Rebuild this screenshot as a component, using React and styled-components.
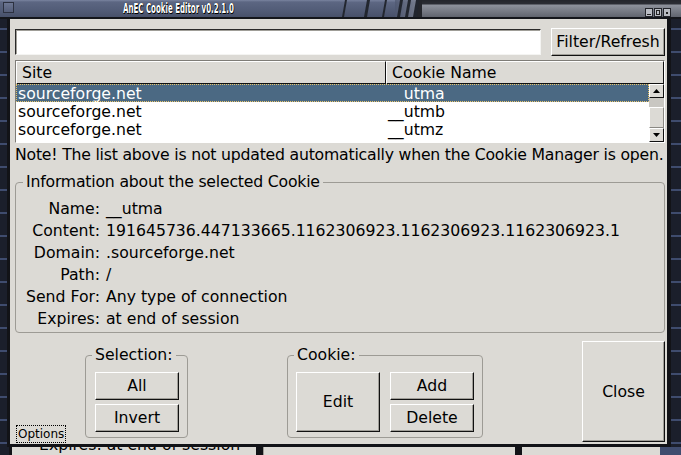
import React from 'react';
import styled, { createGlobalStyle } from 'styled-components';

const GlobalStyle = createGlobalStyle`
  html, body {
    margin: 0;
    padding: 0;
    background: #1f2330;
    overflow: hidden;
  }
`;

const Screen = styled.div`
  width: 681px;
  height: 455px;
  display: flex;
  flex-direction: column;
  overflow: hidden;
  background: #1f2330;
  font-family: "DejaVu Sans", "Bitstream Vera Sans", sans-serif;
  font-size: 15.7px;
  color: #000;
`;

/* ---------- title bar ---------- */

const TitleBar = styled.div`
  display: flex;
  height: 17px;
  flex-shrink: 0;
  border-bottom: 2px solid #14161b;
`;

const TitleLeft = styled.div`
  width: 340px;
  display: flex;
  align-items: center;
  background: linear-gradient(#7a84a0 0, #5c6682 2px, #525c77 60%, #48516a);
`;

const CornerBtn = styled.div`
  width: 9px;
  height: 9px;
  margin: 0 0 3px 3px;
  border: 1px solid #2c3140;
  background: linear-gradient(#6c7692, #545d78);
`;

const TitleText = styled.span`
  display: inline-block;
  margin-left: 109px;
  font-family: "DejaVu Sans Condensed", "DejaVu Sans", sans-serif;
  font-weight: bold;
  font-size: 14px;
  line-height: 17px;
  color: #fff;
  white-space: nowrap;
  transform: scaleX(0.56);
  transform-origin: left center;
  text-shadow: 1px 1px 0 #000, 0 0 1px #000;
`;

const TitleRight = styled.div`
  flex: 1;
  display: flex;
  justify-content: flex-end;
  align-items: flex-end;
  padding-right: 10px;
  background: linear-gradient(#24262c 0, #2c2e35 4px, #8e929c 5px, #7a7e88 60%, #60646e);
`;

const WinButtons = styled.div`
  display: flex;
  gap: 1px;
`;

const WinBtn = styled.div`
  width: 8px;
  height: 9px;
  box-sizing: border-box;
  border: 1px solid #23252b;
  background: #b9bcc3;
  display: flex;
  align-items: center;
  justify-content: center;
`;

function Streaks() {
  const cuts = [
    [2, 4], [24, 27], [42, 44], [57, 60], [65, 68], [73, 80],
  ];
  return (
    <svg width="82" height="17" viewBox="0 0 82 17" style={{ display: 'block' }}>
      <defs>
        <linearGradient id="blue" x1="0" y1="0" x2="0" y2="1">
          <stop offset="0" stopColor="#76809c" />
          <stop offset="0.15" stopColor="#5c6682" />
          <stop offset="1" stopColor="#48516a" />
        </linearGradient>
        <linearGradient id="metal" x1="0" y1="0" x2="1" y2="0">
          <stop offset="0" stopColor="#4d566f" />
          <stop offset="1" stopColor="#8c909a" />
        </linearGradient>
      </defs>
      <rect x="0" y="0" width="82" height="17" fill="url(#blue)" />
      <rect x="55" y="0" width="27" height="17" fill="url(#metal)" opacity="0.7" />
      {cuts.map(([a, b]) => (
        <polygon
          key={a}
          points={`${a + 3},0 ${b + 3},0 ${b},17 ${a},17`}
          fill="#22262f"
        />
      ))}
      <polygon points="79,0 82,0 82,17 77,17" fill="#24262c" />
    </svg>
  );
}

/* ---------- window frame ---------- */

const FrameRow = styled.div`
  display: flex;
  height: 428px;
  flex-shrink: 0;
`;

const Desktop = styled.div`
  width: ${(p) => p.w}px;
  background: repeating-linear-gradient(
    #1b1f2b 0, #1b1f2b 9px, #3f4c6e 9px, #3f4c6e 11px, #1b1f2b 11px, #1b1f2b 23px
  );
`;

const Window = styled.div`
  width: 657px;
  border: 3px solid #121317;
  border-top: none;
  border-right-width: 4px;
`;

const Client = styled.div`
  height: 425px;
  box-sizing: border-box;
  padding: 9px 2px 2px 5px;
  background: #dcdad5;
  display: flex;
  flex-direction: column;
`;

/* ---------- widgets ---------- */

const Button = styled.button`
  width: ${(p) => p.w || 84}px;
  height: ${(p) => p.h || 28}px;
  box-sizing: border-box;
  margin: 0;
  padding: 0 0 1px;
  font-family: inherit;
  font-size: inherit;
  color: #000;
  background: #dcdad5;
  border: 1px solid;
  border-color: #ffffff #111111 #111111 #ffffff;
  box-shadow: inset -1px -1px 0 #a09e98;
  flex-shrink: 0;
  cursor: default;
`;

const TopRow = styled.div`
  display: flex;
  align-items: center;
  gap: 10px;
  height: 28px;
`;

const TextInput = styled.input`
  flex: 1;
  height: 26px;
  box-sizing: border-box;
  margin: 0;
  border: 1px solid;
  border-color: #2a2a2a #f4f4f2 #f4f4f2 #2a2a2a;
  box-shadow: inset 1px 1px 0 #a09e98;
  background: #fff;
  font-family: inherit;
  font-size: inherit;
  outline: none;
`;

const List = styled.div`
  height: 83px;
  margin-top: 4px;
  box-sizing: border-box;
  border: 1px solid;
  border-color: #7e7c77 #ffffff #ffffff #7e7c77;
  background: #fff;
  display: flex;
  flex-direction: column;
`;

const ListHeader = styled.div`
  display: grid;
  grid-template-columns: 370px 1fr;
  height: 23px;
`;

const HeaderCell = styled.div`
  box-sizing: border-box;
  padding-left: 5px;
  line-height: 21px;
  background: #dcdad5;
  border: 1px solid;
  border-color: #ffffff #111111 #111111 #ffffff;
  border-bottom-width: 2px;
  white-space: nowrap;
`;

const ListBody = styled.div`
  flex: 1;
  display: flex;
`;

const Rows = styled.div`
  flex: 1;
  overflow: hidden;
`;

const Row = styled.div`
  display: grid;
  grid-template-columns: 372px 1fr;
  height: 18px;
  line-height: 19px;
  white-space: nowrap;
  background: ${(p) => (p.selected ? '#4b6983' : '#fff')};
  color: ${(p) => (p.selected ? '#fff' : '#000')};
  outline: ${(p) => (p.selected ? '1px dotted #e8c46a' : 'none')};
  outline-offset: -1px;
`;

const Cell = styled.span`
  padding-left: ${(p) => p.pad || 0}px;
`;

const ScrollBar = styled.div`
  width: 15px;
  display: flex;
  flex-direction: column;
  background: #c9c7c2;
`;

const ArrowBtn = styled.div`
  height: 14px;
  box-sizing: border-box;
  border: 1px solid;
  border-color: #ffffff #111111 #111111 #ffffff;
  background: #dcdad5;
  display: flex;
  align-items: center;
  justify-content: center;
`;

const Trough = styled.div`
  flex: 1;
  display: flex;
  flex-direction: column;
  padding-top: 9px;
  box-sizing: border-box;
`;

const Thumb = styled.div`
  height: 21px;
  box-sizing: border-box;
  border: 1px solid;
  border-color: #ffffff #8a8883 #8a8883 #ffffff;
  background: #dcdad5;
`;

const Note = styled.div`
  margin-top: 1px;
  line-height: 22px;
  white-space: nowrap;
  letter-spacing: -0.21px;
`;

const Frame = styled.fieldset`
  margin: ${(p) => p.top || 0}px 0 0;
  padding: 0;
  min-width: 0;
  border: 1px solid #9d9b95;
  border-radius: 4px;
  align-self: ${(p) => (p.stretch ? 'stretch' : 'start')};
`;

const Legend = styled.legend`
  margin-left: ${(p) => p.indent}px;
  padding: 0 3px;
  line-height: 18px;
  white-space: nowrap;
  letter-spacing: ${(p) => p.tight || 0}px;
`;

const InfoGrid = styled.div`
  display: grid;
  grid-template-columns: 84px 1fr;
  column-gap: 6px;
  grid-auto-rows: 22px;
  line-height: 22px;
  padding: 7px 0 2px;
  white-space: nowrap;
`;

const Label = styled.span`
  text-align: right;
`;

const BottomRow = styled.div`
  display: grid;
  grid-template-columns: 70px 103px 99px 196px 99px 83px;
  height: 101px;
  margin-top: 8px;
`;

const Options = styled.div`
  grid-column: 1;
  align-self: end;
  justify-self: start;
  margin: 0 0 -1px 1px;
  padding: 0 1px;
  font-size: 12px;
  line-height: 16px;
  border: 1px dotted #000;
`;

const GroupBody = styled.div`
  display: flex;
  flex-direction: ${(p) => (p.column ? 'column' : 'row')};
  gap: ${(p) => p.gap}px;
  padding: 8px 8px 5px ${(p) => p.left}px;
`;

const Stack = styled.div`
  display: flex;
  flex-direction: column;
  gap: 4px;
`;

const Slot = styled.div`
  grid-column: ${(p) => p.col};
  display: flex;
  align-items: flex-start;
`;

/* ---------- window behind ---------- */

const BackStrip = styled.div`
  height: 8px;
  display: flex;
  overflow: hidden;
  background: #dcdad5;
`;

const BackPart = styled.div`
  width: ${(p) => p.w}px;
  flex-shrink: 0;
  background: ${(p) => p.bg || '#dcdad5'};
  border-left: ${(p) => (p.line ? '1px solid #9d9b95' : 'none')};
  box-sizing: border-box;
  overflow: hidden;
`;

const BackText = styled.div`
  margin-top: -11px;
  padding-left: 27px;
  line-height: 18px;
  white-space: nowrap;
`;

const Triangle = ({ up }) => (
  <svg width="7" height="4" viewBox="0 0 7 4" style={{ display: 'block' }}>
    <polygon points={up ? '3.5,0 7,4 0,4' : '0,0 7,0 3.5,4'} fill="#000" />
  </svg>
);

const rows = [
  { site: 'sourceforge.net', name: '__utma' },
  { site: 'sourceforge.net', name: '__utmb' },
  { site: 'sourceforge.net', name: '__utmz' },
];

const info = [
  ['Name:', '__utma'],
  ['Content:', '191645736.447133665.1162306923.1162306923.1162306923.1'],
  ['Domain:', '.sourceforge.net'],
  ['Path:', '/'],
  ['Send For:', 'Any type of connection'],
  ['Expires:', 'at end of session'],
];

export default function App() {
  return (
    <Screen>
      <GlobalStyle />
      <TitleBar>
        <TitleLeft>
          <CornerBtn />
          <TitleText>AnEC Cookie Editor v0.2.1.0</TitleText>
        </TitleLeft>
        <Streaks />
        <TitleRight>
          <WinButtons>
            <WinBtn>
              <svg width="4" height="4"><rect x="0" y="3" width="4" height="1" fill="#222" /></svg>
            </WinBtn>
            <WinBtn>
              <svg width="4" height="5"><rect x="0.5" y="0.5" width="3" height="4" fill="none" stroke="#222" /></svg>
            </WinBtn>
            <WinBtn>
              <svg width="4" height="4"><rect x="1" y="1" width="2" height="2" fill="#222" /></svg>
            </WinBtn>
          </WinButtons>
        </TitleRight>
      </TitleBar>

      <FrameRow>
        <Desktop w={7} />
        <Window>
          <Client>
            <TopRow>
              <TextInput defaultValue="" />
              <Button w={114} h={28}>Filter/Refresh</Button>
            </TopRow>

            <List>
              <ListHeader>
                <HeaderCell>Site</HeaderCell>
                <HeaderCell>Cookie Name</HeaderCell>
              </ListHeader>
              <ListBody>
                <Rows>
                  {rows.map((r, i) => (
                    <Row key={r.name} selected={i === 0}>
                      <Cell pad={2}>{r.site}</Cell>
                      <Cell>{r.name}</Cell>
                    </Row>
                  ))}
                </Rows>
                <ScrollBar>
                  <ArrowBtn><Triangle up /></ArrowBtn>
                  <Trough><Thumb /></Trough>
                  <ArrowBtn><Triangle /></ArrowBtn>
                </ScrollBar>
              </ListBody>
            </List>

            <Note>Note! The list above is not updated automatically when the Cookie Manager is open.</Note>

            <Frame top={7} stretch>
              <Legend indent={7} tight={-0.2}>Information about the selected Cookie</Legend>
              <InfoGrid>
                {info.map(([k, v]) => (
                  <React.Fragment key={k}>
                    <Label>{k}</Label>
                    <span>{v}</span>
                  </React.Fragment>
                ))}
              </InfoGrid>
            </Frame>

            <BottomRow>
              <Options>Options</Options>
              <Slot col={2}>
                <Frame top={5}>
                  <Legend indent={6}>Selection:</Legend>
                  <GroupBody column gap={4} left={9}>
                    <Button>All</Button>
                    <Button>Invert</Button>
                  </GroupBody>
                </Frame>
              </Slot>
              <Slot col={4}>
                <Frame top={5}>
                  <Legend indent={6}>Cookie:</Legend>
                  <GroupBody gap={10} left={8}>
                    <Button h={60}>Edit</Button>
                    <Stack>
                      <Button>Add</Button>
                      <Button>Delete</Button>
                    </Stack>
                  </GroupBody>
                </Frame>
              </Slot>
              <Slot col={6}>
                <Button w={83} h={101}>Close</Button>
              </Slot>
            </BottomRow>
          </Client>
        </Window>
        <Desktop w={10} />
      </FrameRow>

      <BackStrip>
        <BackPart w={9} bg="#1b1f2b" />
        <BackPart w={3} bg="#121317" />
        <BackPart w={244}>
          <BackText>Expires: at end of session</BackText>
        </BackPart>
        <BackPart w={7} bg="#121317" />
        <BackPart w={252} line />
        <BackPart w={7} bg="#121317" />
        <BackPart w={138} />
        <BackPart w={21} bg="#3f4c6e" />
      </BackStrip>
    </Screen>
  );
}
